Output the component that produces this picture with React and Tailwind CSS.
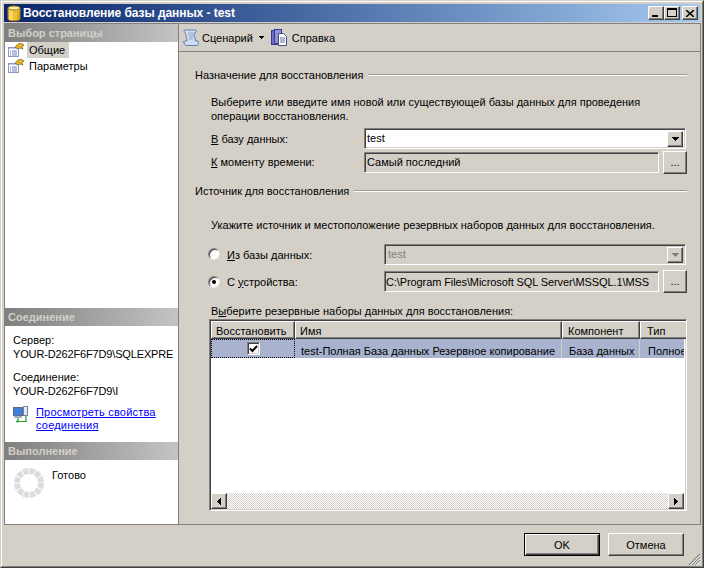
import React from 'react';

const raised = 'border border-t-white border-l-white border-r-[#404040] border-b-[#404040] shadow-[inset_-1px_-1px_0_#808080]';
const sunken = 'border border-t-[#808080] border-l-[#808080] border-r-white border-b-white shadow-[inset_1px_1px_0_#404040,inset_-1px_-1px_0_#d4d0c8]';

const PageIcon = () => (
  <svg width="16" height="14" viewBox="0 0 16 14" className="shrink-0">
    <rect x="0.5" y="4.5" width="10" height="9" fill="#ffffff" stroke="#8a97c8" />
    <path d="M1 5h9v1H1z" fill="#b9c6ea" />
    <path d="M2 8h1M4 8h5M2 10h1M4 10h5M2 12h1M4 12h5" stroke="#6a7cc0" />
    <path d="M7 4l3-3 3-1 3 2-2 2 1 2-3-1-2 1z" fill="#e6b422" stroke="#5c5020" strokeWidth="0.600" />
  </svg>
);

const ScrollIcon = () => (
  <svg width="17" height="18" viewBox="0 0 17 18" className="shrink-0">
    <path d="M3 1h10c1.500 0 2 2 .8 2.600L12 4c-.5 3 1.500 5 1.500 8H16c.8 1 .6 4-1 4.500H4.500C3 16.500 2 15 2.500 13.500L1 13c.5-1 2.500-1 4-1 0-3-1.500-6-1.500-8C2 4 1.500 1 3 1z" fill="#d3ddf0" stroke="#5c80b4" />
    <path d="M6 4h5M6 6h5M7 8h4M7 10h4" stroke="#8fa5cc" />
  </svg>
);

const PagesIcon = () => (
  <svg width="17" height="18" viewBox="0 0 17 18" className="shrink-0">
    <rect x="0.5" y="1.500" width="8" height="14" fill="#6d6fc0" stroke="#3a3a8c" />
    <rect x="3.500" y="0.500" width="7" height="14" fill="#8f92d8" stroke="#3a3a8c" />
    <path d="M7.500 4.500h5l3 3v9h-8z" fill="#fff" stroke="#4a4a80" />
    <path d="M9 9h5M9 11h5M9 13h5" stroke="#5a6fae" />
  </svg>
);

const NetworkIcon = () => (
  <svg width="16" height="17" viewBox="0 0 16 17" className="shrink-0">
    <rect x="0.500" y="1.500" width="9" height="8" fill="#3f7fe0" stroke="#5a6a90" />
    <rect x="10.500" y="0.500" width="4" height="9" fill="#e4e8f0" stroke="#7a8398" />
    <rect x="1" y="10" width="8" height="2" fill="#a8b0c4" />
    <path d="M5 12v3.500h8V10" fill="none" stroke="#2a9a2a" strokeWidth="1.200" />
    <path d="M3 15.500h3" stroke="#2a9a2a" strokeWidth="1.500" />
  </svg>
);

const DbIcon = () => (
  <svg width="16" height="17" viewBox="0 0 16 17" className="shrink-0">
    <path d="M2 3v11c0 2.500 12 2.500 12 0V3z" fill="#f0c030" stroke="#a07818" />
    <path d="M4 5v10M6 5.500v10" stroke="#fbeeb0" />
    <path d="M12 6v9" stroke="#c89420" />
    <ellipse cx="8" cy="3" rx="6" ry="2" fill="#fdf0a8" stroke="#a07818" />
  </svg>
);

const Spinner = () => (
  <svg width="32" height="32" viewBox="0 0 32 32" className="shrink-0">
    <circle cx="16" cy="16" r="12" fill="none" stroke="#dcdcdc" strokeWidth="6" strokeDasharray="5.280 1" />
  </svg>
);

const Arrow = ({ color = 'black' }) => (
  <svg width="7" height="4" viewBox="0 0 7 4">
    <path d="M0 0h7v1h-1v1h-1v1h-1v1h-1v-1h-1v-1h-1v-1h-1z" fill={color} />
  </svg>
);

const PanelHeader = ({ children }) => (
  <div className="h-[18px] pl-[3px] flex items-center bg-gradient-to-r from-[#7f7f7f] to-[#c4c4c4] font-bold text-[#d4d0c8]">{children}</div>
);

const Heading = ({ children }) => (
  <div className="h-[14px] pl-4 flex items-center gap-[5px]">
    <span className="whitespace-nowrap">{children}</span>
    <div className="flex-1 h-[2px] border-t border-t-[#a09c94] border-b border-b-white" />
  </div>
);

const DotsButton = () => (
  <button className={`w-6 h-[23px] ${raised} bg-[#d4d0c8] flex items-center justify-center pb-[1px]`}>...</button>
);

const ComboButton = ({ disabled }) => (
  <div className={`absolute right-[2px] top-[2px] w-4 h-4 ${raised} bg-[#d4d0c8] flex items-center justify-center`}>
    <Arrow color={disabled ? '#808080' : 'black'} />
  </div>
);

const Radio = ({ checked }) => (
  <span className="w-3 h-3 rounded-full bg-white border border-t-[#808080] border-l-[#808080] border-r-[#e8e6e0] border-b-[#e8e6e0] shadow-[inset_1px_1px_0_#404040] flex items-center justify-center shrink-0">
    {checked && <span className="w-1 h-1 rounded-full bg-black" />}
  </span>
);

const HeaderCell = ({ className, children }) => (
  <div className={`h-[18px] shrink-0 ${raised} bg-[#d4d0c8] pt-[1px] flex items-center ${className}`}>{children}</div>
);

const ScrollButton = ({ flip }) => (
  <div className={`w-4 h-4 shrink-0 ${raised} bg-[#d4d0c8] flex items-center justify-center`}>
    <svg width="4" height="7" viewBox="0 0 4 7">
      <path d={flip ? 'M3 0h1v7h-1v-1h-1v-1h-1v-1h-1v-1h1v-1h1v-1h1z' : 'M0 0h1v1h1v1h1v1h1v1h-1v1h-1v1h-1v1h-1z'} fill="black" />
    </svg>
  </div>
);

export default function App() {
  return (
    <div className="relative w-[704px] h-[568px] flex flex-col bg-[#d4d0c8] text-black text-[11px] leading-[14px] font-['Liberation_Sans',sans-serif] border border-t-[#d4d0c8] border-l-[#d4d0c8] border-r-[#404040] border-b-[#404040] overflow-hidden">
      <div className="flex-1 min-h-0 flex flex-col pt-[2px] pl-[2px] pr-[1px] border border-t-white border-l-white border-r-[#808080] border-b-[#808080]">
        {/* title bar */}
        <div className="h-[18px] mr-[1px] pl-[2px] pr-[2px] shrink-0 flex items-center bg-gradient-to-r from-[#0a246a] to-[#a6caf0]">
          <DbIcon />
          <span className="ml-[1px] text-white font-bold text-[12px] tracking-[-0.06px]">Восстановление базы данных - test</span>
          <div className="ml-auto flex">
            <div className={`w-4 h-[14px] ${raised} bg-[#d4d0c8] relative`}>
              <span className="absolute left-[3px] bottom-[2px] w-[6px] h-[2px] bg-black" />
            </div>
            <div className={`w-4 h-[14px] ${raised} bg-[#d4d0c8] flex items-start justify-center pt-[1px]`}>
              <span className="w-[10px] h-[9px] border border-black border-t-2" />
            </div>
            <div className={`ml-[2px] w-4 h-[14px] ${raised} bg-[#d4d0c8] flex items-center justify-center`}>
              <svg width="8" height="7" viewBox="0 0 8 7"><path d="M0 0l8 7M8 0L0 7" stroke="black" strokeWidth="1.500" /></svg>
            </div>
          </div>
        </div>

        {/* main area */}
        <div className="mt-[1px] h-[502px] shrink-0 flex border border-[#808080]">
          <div className="w-[173px] shrink-0 bg-white flex flex-col">
            <div className="h-[284px] shrink-0">
              <PanelHeader>Выбор страницы</PanelHeader>
              <div className="pl-[3px] flex flex-col">
                <div className="h-4 flex items-center">
                  <PageIcon />
                  <span className="ml-[3px] pl-[2px] w-[42px] bg-[#d4d0c8] h-4 flex items-center">Общие</span>
                </div>
                <div className="h-4 flex items-center">
                  <PageIcon />
                  <span className="ml-[3px] pl-[2px]">Параметры</span>
                </div>
              </div>
            </div>
            <div className="h-[134px] shrink-0">
              <PanelHeader>Соединение</PanelHeader>
              <div className="pl-[8px] pt-[7px]">
                <div>Сервер:</div>
                <div className="tracking-[-0.15px] whitespace-nowrap">YOUR-D262F6F7D9\SQLEXPRE</div>
                <div className="mt-[9px]">Соединение:</div>
                <div className="tracking-[-0.15px]">YOUR-D262F6F7D9\I</div>
                <div className="mt-[8px] flex gap-[7px]">
                  <NetworkIcon />
                  <a className="text-[#0000ff] underline leading-[13px] tracking-[0.2px]">Просмотреть свойства<br />соединения</a>
                </div>
              </div>
            </div>
            <div className="flex-1">
              <PanelHeader>Выполнение</PanelHeader>
              <div className="pl-[8px] pt-[7px] flex items-start gap-[7px]">
                <Spinner />
                <span className="pt-[1px]">Готово</span>
              </div>
            </div>
          </div>

          <div className="flex-1 min-w-0 border-l border-[#808080] flex flex-col">
            {/* toolbar */}
            <div className="h-[28px] shrink-0 border-b border-[#808080] pl-[3px] flex items-center">
              <ScrollIcon />
              <span className="ml-[3px]">Сценарий</span>
              <svg width="5" height="3" viewBox="0 0 5 3" className="ml-[6px] mr-[7px]">
                <path d="M0 0h5v1h-1v1h-1v1h-1v-1h-1v-1h-1z" fill="black" />
              </svg>
              <PagesIcon />
              <span className="ml-[4px]">Справка</span>
            </div>

            {/* form */}
            <div className="pr-[13px] pt-[16px]">
              <Heading>Назначение для восстановления</Heading>
              <p className="ml-[32px] mt-[13px]">Выберите или введите имя новой или существующей базы данных для проведения<br />операции восстановления.</p>
              <div className="mt-[5px] ml-[32px] flex items-center h-[20px]">
                <span className="w-[153px] pt-[2px]"><u>В</u> базу данных:</span>
                <div className={`relative flex-1 h-[21px] mr-[1px] ${sunken} bg-white pl-[2px] flex items-center`}>
                  test
                  <ComboButton />
                </div>
              </div>
              <div className="mt-[3px] ml-[32px] flex items-center h-[23px]">
                <span className="w-[153px] pb-[2px]"><u>К</u> моменту времени:</span>
                <div className={`w-[295px] h-[21px] ${sunken} pl-[2px] pb-[1px] flex items-center`}>Самый последний</div>
                <div className="ml-[4px]"><DotsButton /></div>
              </div>

              <div className="mt-[10px]"><Heading>Источник для восстановления</Heading></div>
              <p className="ml-[32px] mt-[20px]">Укажите источник и местоположение резервных наборов данных для восстановления.</p>

              <div className="mt-[11px] ml-[29px] flex items-center h-[22px]">
                <Radio />
                <span className="ml-[7px] w-[157px] pt-[2px]"><u>И</u>з базы данных:</span>
                <div className={`relative flex-1 h-[21px] mr-[1px] ${sunken} pl-[3px] flex items-center text-[#808080]`}>
                  test
                  <ComboButton disabled />
                </div>
              </div>
              <div className="mt-[5px] ml-[29px] flex items-center h-[23px]">
                <Radio checked />
                <span className="ml-[7px] w-[157px]">С <u>у</u>стройства:</span>
                <div className={`w-[275px] h-[21px] ${sunken} pl-[1px] flex items-center whitespace-nowrap overflow-hidden tracking-[-0.1px]`}>C:\Program Files\Microsoft SQL Server\MSSQL.1\MSS</div>
                <div className="ml-[4px]"><DotsButton /></div>
              </div>

              <div className="ml-[32px] mt-[11px]">В<u>ы</u>берите резервные наборы данных для восстановления:</div>

              {/* backup sets grid */}
              <div className={`ml-[30px] mt-[1px] h-[192px] ${sunken} bg-white pt-[1px] pl-[1px] pr-[2px] pb-[1px] flex flex-col overflow-hidden`}>
                <div className="flex shrink-0">
                  <HeaderCell className="w-[84px] pl-[4px]">Восстановить</HeaderCell>
                  <HeaderCell className="w-[267px] pl-[4px]">Имя</HeaderCell>
                  <HeaderCell className="w-[78px] pl-[5px]">Компонент</HeaderCell>
                  <HeaderCell className="w-[48px] pl-[6px]">Тип</HeaderCell>
                </div>
                <div className="flex h-[19px] shrink-0 bg-[#a9b3cf] overflow-hidden">
                  <div className="w-[84px] shrink-0 border border-dotted border-black flex items-center justify-center">
                    <span className={`w-[13px] h-[13px] bg-white ${sunken} flex items-center justify-center`}>
                      <svg width="9" height="8" viewBox="0 0 9 8"><path d="M1 3.500l2.500 2.500L8 1" fill="none" stroke="black" strokeWidth="2" /></svg>
                    </span>
                  </div>
                  <div className="w-[267px] shrink-0 pl-[6px] pt-[5px] flex items-center border-r border-[#d4d0c8] whitespace-nowrap">test-Полная База данных Резервное копирование</div>
                  <div className="w-[78px] shrink-0 pl-[7px] pt-[5px] flex items-center border-r border-[#d4d0c8] whitespace-nowrap">База данных</div>
                  <div className="w-[48px] shrink-0 pl-[8px] pt-[5px] flex items-center whitespace-nowrap overflow-hidden">Полное</div>
                </div>
                <div className="flex-1" />
                <div className="flex h-4 shrink-0 bg-[repeating-conic-gradient(#ffffff_0_25%,#d4d0c8_0_50%)] bg-[length:2px_2px]">
                  <ScrollButton flip />
                  <div className="flex-1" />
                  <ScrollButton />
                </div>
              </div>
            </div>
          </div>
        </div>

        {/* footer */}
        <div className="flex-1 relative flex justify-end gap-2 pt-2 pr-[17px]">
          <button className="w-[76px] h-[23px] border border-black bg-[#d4d0c8] shadow-[inset_1px_1px_0_#ffffff,inset_-1px_-1px_0_#404040,inset_-2px_-2px_0_#808080]">OK</button>
          <button className={`w-[76px] h-[23px] ${raised} bg-[#d4d0c8]`}>Отмена</button>
          <svg width="13" height="13" viewBox="0 0 13 13" className="absolute right-0 bottom-0">
            <path d="M12 1L1 12M12 4L4 12M12 7L7 12" stroke="#808080" strokeWidth="1.200" />
            <path d="M12 2.500L2.500 12M12 5.500L5.500 12M12 8.500L8.500 12" stroke="#ffffff" />
          </svg>
        </div>
      </div>
    </div>
  );
}
